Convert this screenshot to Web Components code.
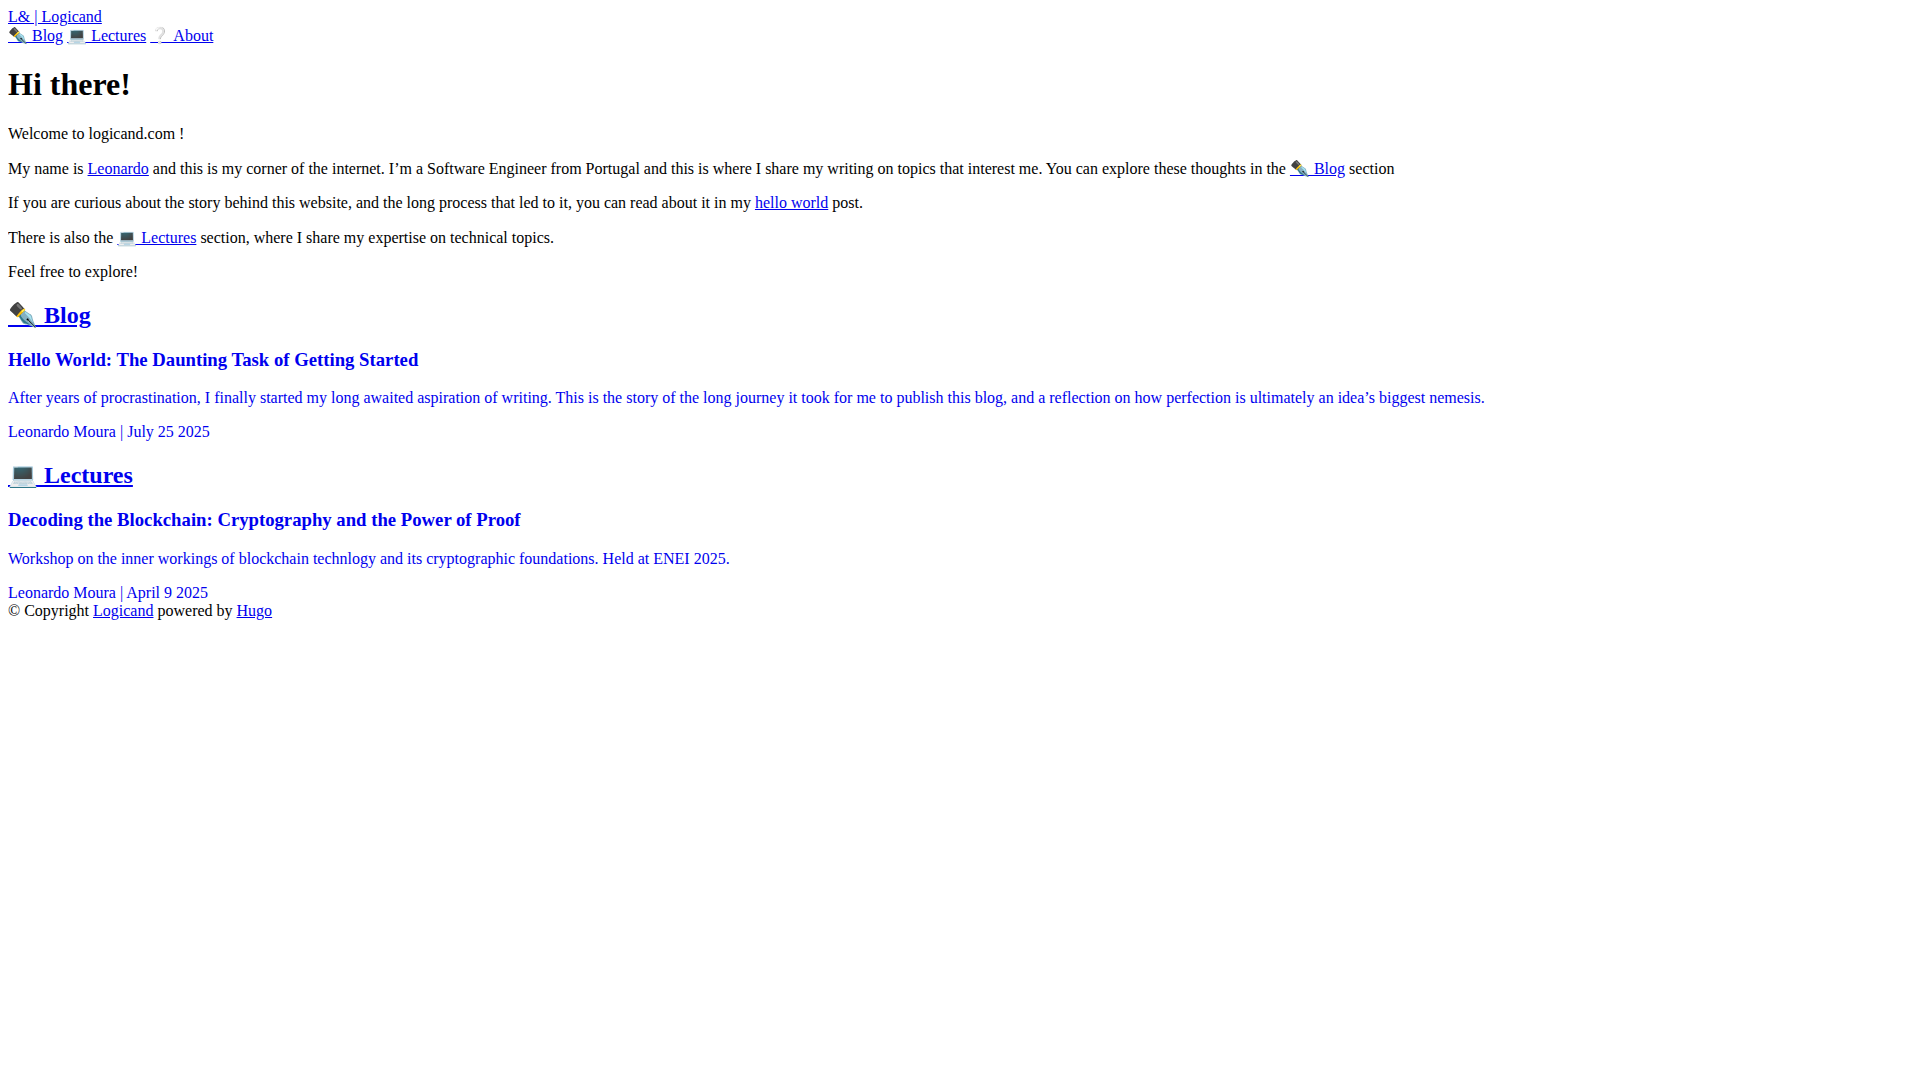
<!DOCTYPE html>
<html lang="en">
<head>
<meta charset="utf-8">
<title>L& | Logicand</title>
<style>
  body { font-family: "Liberation Serif", "Times New Roman", serif; }
</style>
</head>
<body>
<site-header></site-header>
<site-main></site-main>
<site-footer></site-footer>

<template id="header-tpl">
  <style>
    :host { display: block; }
    a { color: #0000ee; }
  </style>
  <div><a href="#">L&amp; | Logicand</a></div>
  <nav><a href="#">✒️ Blog</a> <a href="#">💻 Lectures</a> <a href="#">❔ About</a></nav>
</template>

<template id="main-tpl">
  <style>
    :host { display: block; }
    a { color: #0000ee; }
  </style>
  <h1>Hi there!</h1>
  <p>Welcome to logicand.com !</p>
  <p>My name is <a href="#">Leonardo</a> and this is my corner of the internet. I’m a Software Engineer from Portugal and this is where I share my writing on topics that interest me. You can explore these thoughts in the <a href="#">✒️ Blog</a> section</p>
  <p>If you are curious about the story behind this website, and the long process that led to it, you can read about it in my <a href="#">hello world</a> post.</p>
  <p>There is also the <a href="#">💻 Lectures</a> section, where I share my expertise on technical topics.</p>
  <p>Feel free to explore!</p>
  <post-section heading="✒️ Blog" title-text="Hello World: The Daunting Task of Getting Started" meta="Leonardo Moura | July 25 2025">
    After years of procrastination, I finally started my long awaited aspiration of writing. This is the story of the long journey it took for me to publish this blog, and a reflection on how perfection is ultimately an idea’s biggest nemesis.
  </post-section>
  <post-section heading="💻 Lectures" title-text="Decoding the Blockchain: Cryptography and the Power of Proof" meta="Leonardo Moura | April 9 2025">
    Workshop on the inner workings of blockchain technlogy and its cryptographic foundations. Held at ENEI 2025.
  </post-section>
</template>

<template id="section-tpl">
  <style>
    :host { display: block; }
    a { color: #0000ee; }
    #entry { text-decoration: none; }
    #meta { margin-bottom: 0; }
  </style>
  <h2><a href="#" id="heading"></a></h2>
  <a href="#" id="entry">
    <h3 id="title"></h3>
    <p><slot></slot></p>
    <p id="meta"></p>
  </a>
</template>

<template id="footer-tpl">
  <style>
    :host { display: block; }
    a { color: #0000ee; }
  </style>
  © Copyright <a href="#">Logicand</a> powered by <a href="#">Hugo</a>
</template>

<script>
  class TemplateElement extends HTMLElement {
    constructor(tplId) {
      super();
      this.attachShadow({ mode: "open" });
      const tpl = document.getElementById(tplId);
      this.shadowRoot.appendChild(tpl.content.cloneNode(true));
    }
  }

  class SiteHeader extends TemplateElement {
    constructor() { super("header-tpl"); }
  }

  class SiteMain extends TemplateElement {
    constructor() { super("main-tpl"); }
  }

  class SiteFooter extends TemplateElement {
    constructor() { super("footer-tpl"); }
  }

  class PostSection extends TemplateElement {
    constructor() { super("section-tpl"); }

    connectedCallback() {
      this.shadowRoot.querySelector("#heading").textContent = this.getAttribute("heading");
      this.shadowRoot.querySelector("#title").textContent = this.getAttribute("title-text");
      this.shadowRoot.querySelector("#meta").textContent = this.getAttribute("meta");
    }
  }

  customElements.define("post-section", PostSection);
  customElements.define("site-header", SiteHeader);
  customElements.define("site-main", SiteMain);
  customElements.define("site-footer", SiteFooter);
</script>
</body>
</html>
